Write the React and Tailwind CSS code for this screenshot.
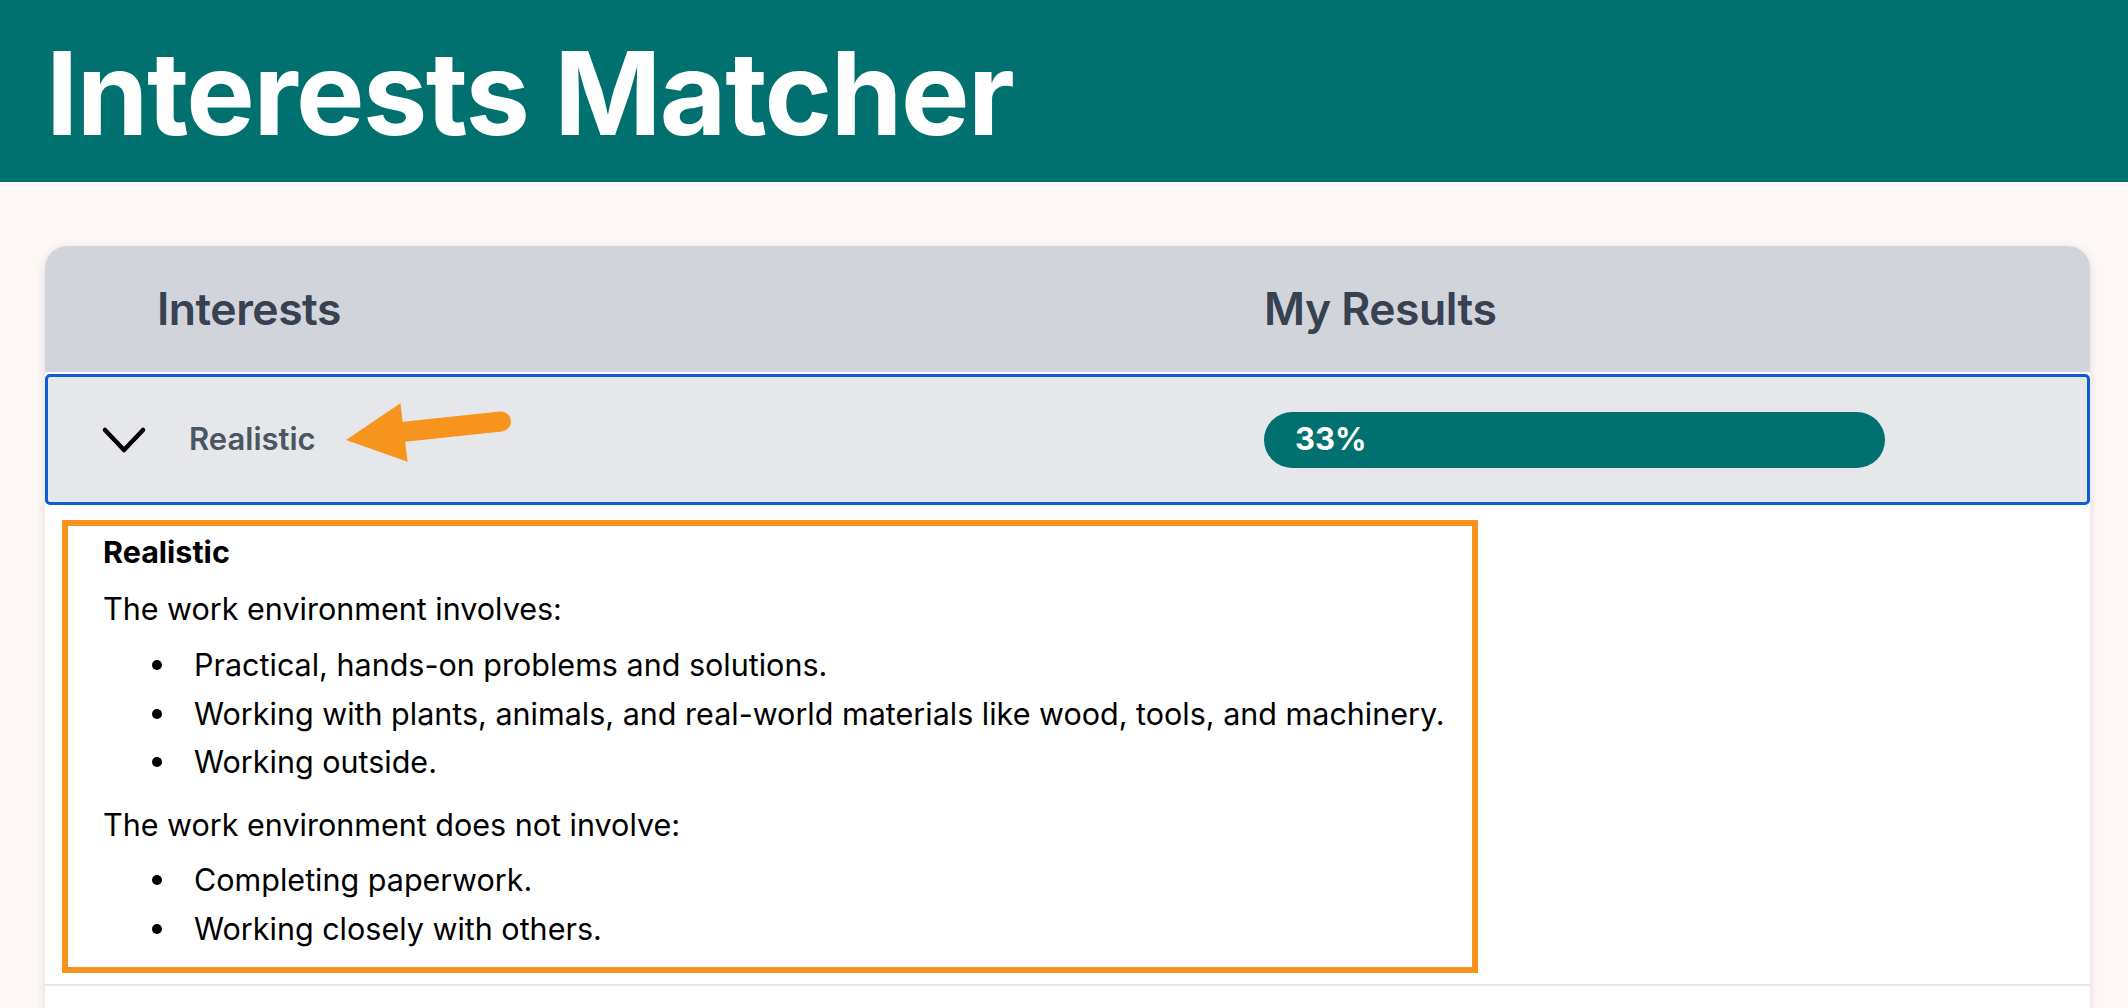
import React from "react";

function Chevron() {
  return (
    <svg width="46" height="28" viewBox="0 0 46 28" className="shrink-0">
      <polyline points="4,4 23,24 42,4" fill="none" stroke="#000" strokeWidth="4.5" strokeLinecap="round" strokeLinejoin="round" />
    </svg>
  );
}

function Bullet({ children }) {
  return (
    <li className="flex items-center">
      <span className="ml-[49px] w-[10px] h-[10px] rounded-full bg-black shrink-0" />
      <span className="ml-[32px]">{children}</span>
    </li>
  );
}

export default function App() {
  return (
    <div className="min-h-screen bg-[#fdf8f5]" style={{ fontFamily: "Inter, 'Noto Sans', sans-serif" }}>
      <header className="h-[182px] bg-[#00716f] flex items-center pl-[46px]">
        <h1 className="text-white font-bold text-[115px] leading-none tracking-[-1.5px] mt-[4px]">Interests Matcher</h1>
      </header>
      <main className="pt-[64px] pl-[45px] pr-[38px]">
        <div className="rounded-[22px] bg-white shadow-[0_2px_10px_rgba(0,0,0,0.12)] overflow-hidden">
          <div className="h-[126px] bg-[#d1d5db] grid grid-cols-[1219px_1fr] items-center">
            <div className="pl-[112px] text-[44.5px] font-semibold tracking-[-0.5px] text-[#374151]">Interests</div>
            <div className="text-[44.5px] font-semibold tracking-[-0.5px] text-[#374151]">My Results</div>
          </div>
          <div className="mt-[2px] relative h-[131px] border-[3px] border-[#0b5fd3] rounded-[5px] bg-[#e5e7eb] grid grid-cols-[1216px_1fr] items-center">
            <div className="flex items-center pl-[53px]">
              <Chevron />
              <span className="ml-[42px] text-[31px] font-semibold text-[#4b5563]">Realistic</span>
            </div>
            <div>
              <div className="w-[621px] h-[56px] rounded-full bg-[#00716f] flex items-center pl-[31px]">
                <span className="text-white font-bold text-[31px]">33%</span>
              </div>
            </div>
            <svg className="absolute left-[-3px] top-[-3px] pointer-events-none" width="600" height="131">
              <line x1="352" y1="58.5" x2="456" y2="47.5" stroke="#f7941d" strokeWidth="20" strokeLinecap="round" />
              <polygon points="301,66 355.4,29.3 362.6,87.7" fill="#f7941d" />
            </svg>
          </div>
          <div className="pt-[15px] pl-[17px]">
            <div className="w-[1416px] h-[453px] border-[6px] border-[#f7941d] pl-[35px] pt-[2px] text-[30.5px] leading-[48.5px] text-black">
              <div className="font-bold">Realistic</div>
              <p className="mt-[8px]">The work environment involves:</p>
              <ul className="mt-[8px]">
                <Bullet>Practical, hands-on problems and solutions.</Bullet>
                <Bullet>Working with plants, animals, and real-world materials like wood, tools, and machinery.</Bullet>
                <Bullet>Working outside.</Bullet>
              </ul>
              <p className="mt-[14px]">The work environment does not involve:</p>
              <ul className="mt-[7px]">
                <Bullet>Completing paperwork.</Bullet>
                <Bullet>Working closely with others.</Bullet>
              </ul>
            </div>
          </div>
          <div className="mt-[11px] h-[2px] bg-[#e5e7eb]" />
          <div className="h-[60px]" />
        </div>
      </main>
    </div>
  );
}
